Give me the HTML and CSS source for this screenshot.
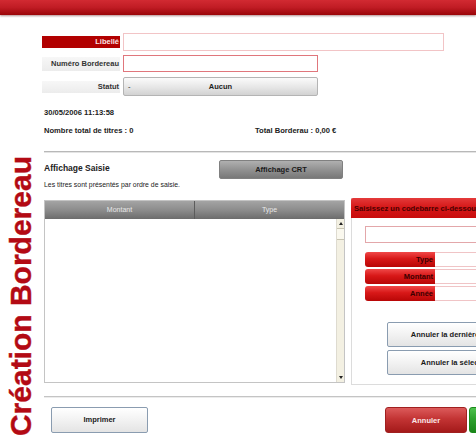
FILE: index.html
```html
<!DOCTYPE html>
<html lang="fr">
<head>
<meta charset="utf-8">
<title>Création Bordereau</title>
<link rel="stylesheet" href="styles.css">
</head>
<body>
<div class="page">
  <div class="topbar"></div>
  <div class="main">
    <div class="side"><span class="vtitle">Création Bordereau</span></div>
    <div class="content">
      <div class="form">
        <div class="row r1">
          <div class="lbl red">Libellé</div>
          <div class="inp libelle"></div>
        </div>
        <div class="row r2">
          <div class="lbl gray">Numéro Bordereau</div>
          <div class="inp numero"></div>
        </div>
        <div class="row r3">
          <div class="lbl gray">Statut</div>
          <div class="select"><span class="dash">-</span><span class="sel-text">Aucun</span></div>
        </div>
      </div>
      <div class="date">30/05/2006 11:13:58</div>
      <div class="totals">
        <span class="nb">Nombre total de titres : 0</span>
        <span class="tot">Total Borderau : 0,00 €</span>
      </div>
      <div class="sep"></div>
      <div class="aff-row">
        <div class="aff-title">Affichage Saisie</div>
        <div class="btn-dark">Affichage CRT</div>
      </div>
      <div class="aff-sub">Les titres sont présentés par ordre de saisie.</div>
      <div class="work">
        <div class="grid">
          <div class="grid-head">
            <div class="col c1">Montant</div>
            <div class="col c2">Type</div>
          </div>
          <div class="grid-body">
            <div class="rows"></div>
            <div class="scroll">
              <span class="arr up"></span>
              <span class="thumb"></span>
              <span class="track"></span>
              <span class="arr down"></span>
            </div>
          </div>
        </div>
        <div class="panel">
          <div class="panel-head">Saisissez un codebarre ci-dessous</div>
          <div class="panel-body">
            <div class="inp code"></div>
            <div class="fields">
              <div class="frow"><div class="flbl">Type</div><div class="fval"></div></div>
              <div class="frow"><div class="flbl">Montant</div><div class="fval"></div></div>
              <div class="frow"><div class="flbl">Année</div><div class="fval"></div></div>
            </div>
            <div class="actions">
              <div class="btn-light wide">Annuler la dernière saisie</div>
              <div class="btn-light wide">Annuler la sélection</div>
            </div>
          </div>
        </div>
      </div>
      <div class="sep sep2"></div>
      <div class="bottom">
        <div class="btn-light print">Imprimer</div>
        <div class="spacer"></div>
        <div class="btn-red">Annuler</div>
        <div class="btn-green">Valider</div>
      </div>
    </div>
  </div>
</div>
</body>
</html>
```
FILE: styles.css
```css
html, body {
  margin: 0;
  padding: 0;
  background: #fff;
  overflow: hidden;
}
.page {
  width: 476px;
  height: 444px;
  overflow: hidden;
  font-family: "Liberation Sans", Arial, sans-serif;
  color: #222;
}
.topbar {
  height: 15px;
  background: linear-gradient(#d22a32 0%, #c01c24 50%, #9a0508 100%);
  box-shadow: 0 1px 2px rgba(80, 0, 0, 0.45);
}
.main {
  display: flex;
  width: 640px;
}
.side {
  width: 44px;
  flex: none;
  display: flex;
  justify-content: flex-start;
  align-items: flex-end;
  height: 429px;
}
.vtitle {
  writing-mode: vertical-rl;
  transform: rotate(180deg);
  font-weight: bold;
  font-size: 30px;
  line-height: 34px;
  color: #b30a14;
  margin-left: 4px;
  margin-bottom: 8px;
  white-space: nowrap;
  -webkit-text-stroke: 0.4px #b30a14;
}
.content {
  flex: 1;
  padding-top: 18px;
}
.form {
  margin-left: -2px;
}
.row {
  display: flex;
  align-items: center;
  gap: 3px;
}
.r1 { height: 18px; }
.r2 { height: 17px; margin-top: 4px; }
.r3 { height: 19px; margin-top: 5px; }
.lbl {
  width: 77px;
  padding-right: 1px;
  height: 12px;
  line-height: 12px;
  font-size: 7.5px;
  font-weight: bold;
  text-align: right;
}
.r2 .lbl { height: 14px; line-height: 14px; }
.lbl.red {
  background: #b20000;
  color: #fbe4e4;
}
.lbl.gray {
  background: linear-gradient(#f7f7f7, #ececec);
  color: #333;
}
.inp {
  box-sizing: border-box;
  background: #fff;
}
.libelle {
  width: 321px;
  height: 18px;
  border: 1px solid #f2c4c6;
}
.numero {
  width: 195px;
  height: 17px;
  border: 1px solid #e0767c;
}
.select {
  box-sizing: border-box;
  width: 195px;
  height: 19px;
  border: 1px solid #b4b4b4;
  border-radius: 2px;
  background: linear-gradient(#fbfbfb, #e6e6e6 55%, #d2d2d2);
  display: flex;
  align-items: center;
  font-size: 7.5px;
  font-weight: bold;
  color: #222;
}
.dash {
  width: 8px;
  padding-left: 4px;
  font-weight: normal;
}
.sel-text {
  flex: 1;
  text-align: center;
  padding-right: 12px;
}
.date {
  margin-top: 12px;
  height: 10px;
  line-height: 10px;
  font-size: 7.6px;
  font-weight: bold;
}
.totals {
  margin-top: 8px;
  height: 10px;
  line-height: 10px;
  font-size: 7.6px;
  font-weight: bold;
  display: flex;
}
.nb { width: 211px; }
.sep {
  margin-top: 15px;
  height: 1px;
  background: #b8b8b8;
  border-bottom: 1px solid #e4e4e4;
}
.aff-row {
  margin-top: 7px;
  display: flex;
  align-items: center;
  height: 19px;
}
.aff-title {
  width: 175px;
  font-size: 8.5px;
  font-weight: bold;
  padding-bottom: 3px;
}
.btn-dark {
  box-sizing: border-box;
  width: 124px;
  height: 19px;
  line-height: 18px;
  text-align: center;
  font-size: 7.5px;
  font-weight: bold;
  color: #1a1a1a;
  border: 1px solid #808080;
  border-radius: 2px;
  background: linear-gradient(#b0b0b0, #929292 50%, #787878);
}
.aff-sub {
  margin-top: 1px;
  height: 10px;
  line-height: 10px;
  font-size: 6.9px;
}
.work {
  margin-top: 8px;
  display: flex;
  align-items: flex-start;
  gap: 6px;
}
.grid {
  margin-top: 2px;
  box-sizing: border-box;
  width: 301px;
  height: 183px;
  border: 1px solid #c4c4c4;
  display: flex;
  flex-direction: column;
}
.grid-head {
  display: flex;
  height: 18px;
  background: linear-gradient(#a4a4a4, #8c8c8c 50%, #6c6c6c);
  color: #e8e8e8;
  font-size: 7px;
  line-height: 17px;
}
.col { text-align: center; }
.c1 { width: 149px; border-right: 1px solid #5c5c5c; }
.c2 { flex: 1; }
.grid-body {
  flex: 1;
  display: flex;
}
.rows { flex: 1; }
.scroll {
  width: 7px;
  background: #f3f0e2;
  border-left: 1px solid #dedbd0;
  display: flex;
  flex-direction: column;
  align-items: center;
}
.arr {
  width: 0;
  height: 0;
  border-left: 2px solid transparent;
  border-right: 2px solid transparent;
  margin: 3px 0;
}
.arr.up { border-bottom: 3px solid #222; }
.arr.down { border-top: 3px solid #222; }
.thumb {
  width: 7px;
  height: 10px;
  border-top: 1px solid #c8c4b2;
  border-bottom: 1px solid #c8c4b2;
  background: #faf8ee;
}
.track { flex: 1; }
.panel {
  box-sizing: border-box;
  width: 230px;
  height: 187px;
  border: 1px solid #dcdcdc;
  border-top: none;
}
.panel-head {
  height: 20px;
  line-height: 21px;
  background: linear-gradient(#e43a3a, #d41616 50%, #c80c0c);
  color: #4a0000;
  font-size: 7.6px;
  font-weight: bold;
  padding-left: 3px;
  white-space: nowrap;
  margin-left: -1px;
  border-radius: 2px 0 0 0;
}
.panel-body {
  padding: 8px 0 0 13px;
}
.code {
  width: 190px;
  height: 17px;
  border: 1px solid #e3a7aa;
}
.fields {
  margin-top: 9px;
  display: flex;
  flex-direction: column;
  gap: 2px;
}
.frow {
  display: flex;
  height: 15px;
}
.flbl {
  width: 68px;
  padding-right: 2px;
  border-radius: 3px 0 0 3px;
  background: linear-gradient(#f04848, #d81818 45%, #b80606);
  color: #3a0000;
  font-size: 7.5px;
  font-weight: bold;
  text-align: right;
  line-height: 15px;
}
.fval {
  box-sizing: border-box;
  width: 120px;
  border: 1px solid #f0c4c6;
  border-left: none;
  background: #fff;
}
.actions {
  margin-top: 21px;
  margin-left: 22px;
  display: flex;
  flex-direction: column;
  gap: 3px;
}
.btn-light {
  box-sizing: border-box;
  border: 1px solid #8a9cb0;
  border-radius: 2px;
  background: linear-gradient(#ffffff, #f2f2f2 50%, #e4e4e4);
  text-align: center;
  font-size: 7.5px;
  font-weight: bold;
  color: #1a1a1a;
}
.wide {
  width: 139px;
  height: 25px;
  line-height: 23px;
  white-space: nowrap;
}
.sep2 {
  margin-top: 11px;
  background: #c4c4c4;
  border-bottom: 1px solid #ececec;
}
.bottom {
  margin-top: 9px;
  display: flex;
  height: 26px;
}
.print {
  margin-left: 7px;
  width: 97px;
  height: 26px;
  line-height: 24px;
}
.spacer { width: 237px; }
.btn-red {
  box-sizing: border-box;
  width: 82px;
  height: 26px;
  line-height: 25px;
  text-align: center;
  border-radius: 3px;
  border: 1px solid #a02020;
  background: linear-gradient(#dc5a5a, #c33434 45%, #a41a1a);
  color: #fbe8e8;
  font-size: 7.5px;
  font-weight: bold;
}
.btn-green {
  box-sizing: border-box;
  margin-left: 2px;
  width: 82px;
  height: 26px;
  line-height: 25px;
  text-align: center;
  border-radius: 3px;
  border: 1px solid #1a8a1a;
  background: linear-gradient(#4ec24e, #2ea22e 45%, #1a861a);
  color: #eaffea;
  font-size: 7.5px;
  font-weight: bold;
}
```
